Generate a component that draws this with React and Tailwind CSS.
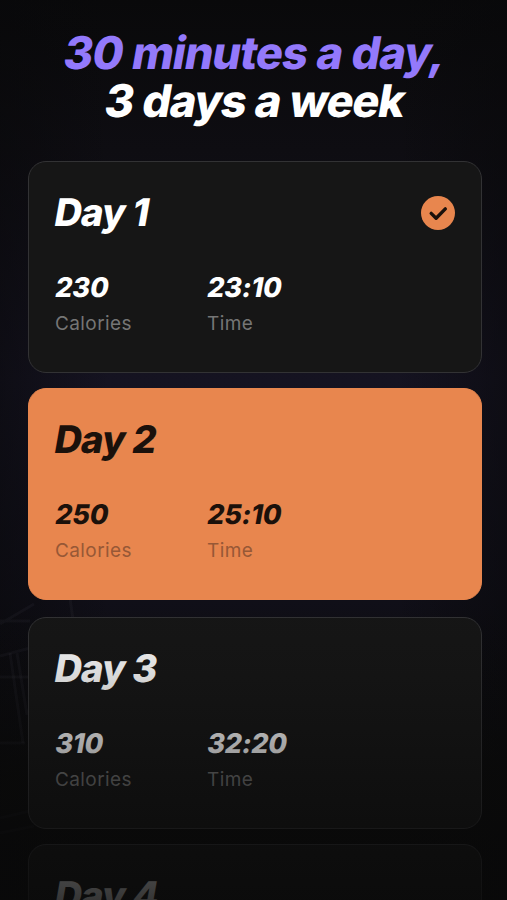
import clsx from "clsx";

const days = [
  { title: "Day 1", calories: "230", time: "23:10", done: true },
  { title: "Day 2", calories: "250", time: "25:10", active: true },
  { title: "Day 3", calories: "310", time: "32:20" },
  { title: "Day 4", calories: "340", time: "35:40" },
];

// Slanted upright face, keeps the two-storey "a"
function Slant({ className, children }) {
  return <span className={clsx("block w-fit origin-[0_78%] -skew-x-[10deg] whitespace-nowrap", className)}>{children}</span>;
}

function CheckBadge() {
  return (
    <svg viewBox="0 0 34 34" className="mt-0.5 h-[34px] w-[34px] shrink-0" role="img" aria-label="Completed">
      <circle cx="17" cy="17" r="17" fill="#e8864e" />
      <path d="M10.2 17.4 L15.1 22.2 L24.3 12.9" fill="none" stroke="#1b110b" strokeWidth="3.4" strokeLinecap="round" strokeLinejoin="round" />
    </svg>
  );
}

function Stat({ value, label, active }) {
  return (
    <div className="w-[152px]">
      <Slant className="-ml-[1.5px] text-[27px] leading-[34px] font-extrabold tracking-[-0.2px]">{value}</Slant>
      <div
        className={clsx(
          "mt-[7px] text-[19px] leading-6 tracking-[0.4px]",
          active ? "text-[#975836]" : "text-[#757575]"
        )}
      >
        {label}
      </div>
    </div>
  );
}

function DayCard({ day }) {
  return (
    <article
      className={clsx(
        "h-[212px] shrink-0 rounded-[18px] border pt-[28px] pr-[26px] pl-[26px]",
        day.active ? "mb-0.5 border-[#e8864e] bg-[#e8864e] text-[#1b110b]" : "border-[#323234] bg-[#161616] text-white"
      )}
    >
      <div className="flex h-11 items-center justify-between">
        <h2 className="-ml-0.5 text-[38px] leading-[44px] font-extrabold tracking-[-0.8px]">
          <Slant>{day.title}</Slant>
        </h2>
        {day.done && <CheckBadge />}
      </div>
      <div className="mt-[37px] flex">
        <Stat value={day.calories} label="Calories" active={day.active} />
        <Stat value={day.time} label="Time" active={day.active} />
      </div>
    </article>
  );
}

// Faint gym equipment outlines behind the cards
function Backdrop() {
  return (
    <svg viewBox="0 0 120 400" className="absolute top-[480px] left-0 h-[400px] w-[120px]" fill="none" stroke="#a0a0b4" aria-hidden="true">
      <g strokeOpacity="0.05" strokeWidth="3">
        <path d="M0 144 L34 124 M0 141 H30" />
        <path d="M0 176 L30 168 M0 197 H30" />
        <path d="M10 173 L23 263 M17 173 L27 235" />
        <path d="M0 263 H25" />
        <path d="M70 118 L73 140" />
        <path d="M0 338 L30 331" strokeOpacity="0.04" />
        <path d="M0 353 L34 346" strokeOpacity="0.04" />
      </g>
    </svg>
  );
}

export default function App() {
  return (
    <main className="relative h-[900px] w-full overflow-hidden bg-[linear-gradient(180deg,#09090a_0px,#0e0d12_150px,#151321_380px,#100f18_600px,#0b0b0c_760px,#090909_900px)] font-['Inter',sans-serif]">
      <div className="absolute inset-0 bg-[linear-gradient(90deg,#08080a88_0px,transparent_110px,transparent_397px,#08080a88_507px)]" />
      <Backdrop />
      <div className="relative flex h-full flex-col px-7 pr-[25px]">
        <h1 className="mt-[29px] flex flex-col items-center pr-[5px] text-[45px] leading-[48px] font-extrabold text-white">
          <Slant className="tracking-[-0.9px] [word-spacing:0.6px] text-[#9379fb]">30 minutes a day,</Slant>
          <Slant className="tracking-[-1.2px] [word-spacing:0.7px]">3 days a week</Slant>
        </h1>
        <div className="mt-9 flex flex-col gap-[15px]">
          {days.map((day) => (
            <DayCard key={day.title} day={day} />
          ))}
        </div>
      </div>
      <div className="pointer-events-none absolute inset-x-0 bottom-0 h-[300px] bg-[linear-gradient(180deg,transparent_0%,#09090920_22%,#09090958_47%,#09090999_73%,#090909d0_100%)]" />
    </main>
  );
}
